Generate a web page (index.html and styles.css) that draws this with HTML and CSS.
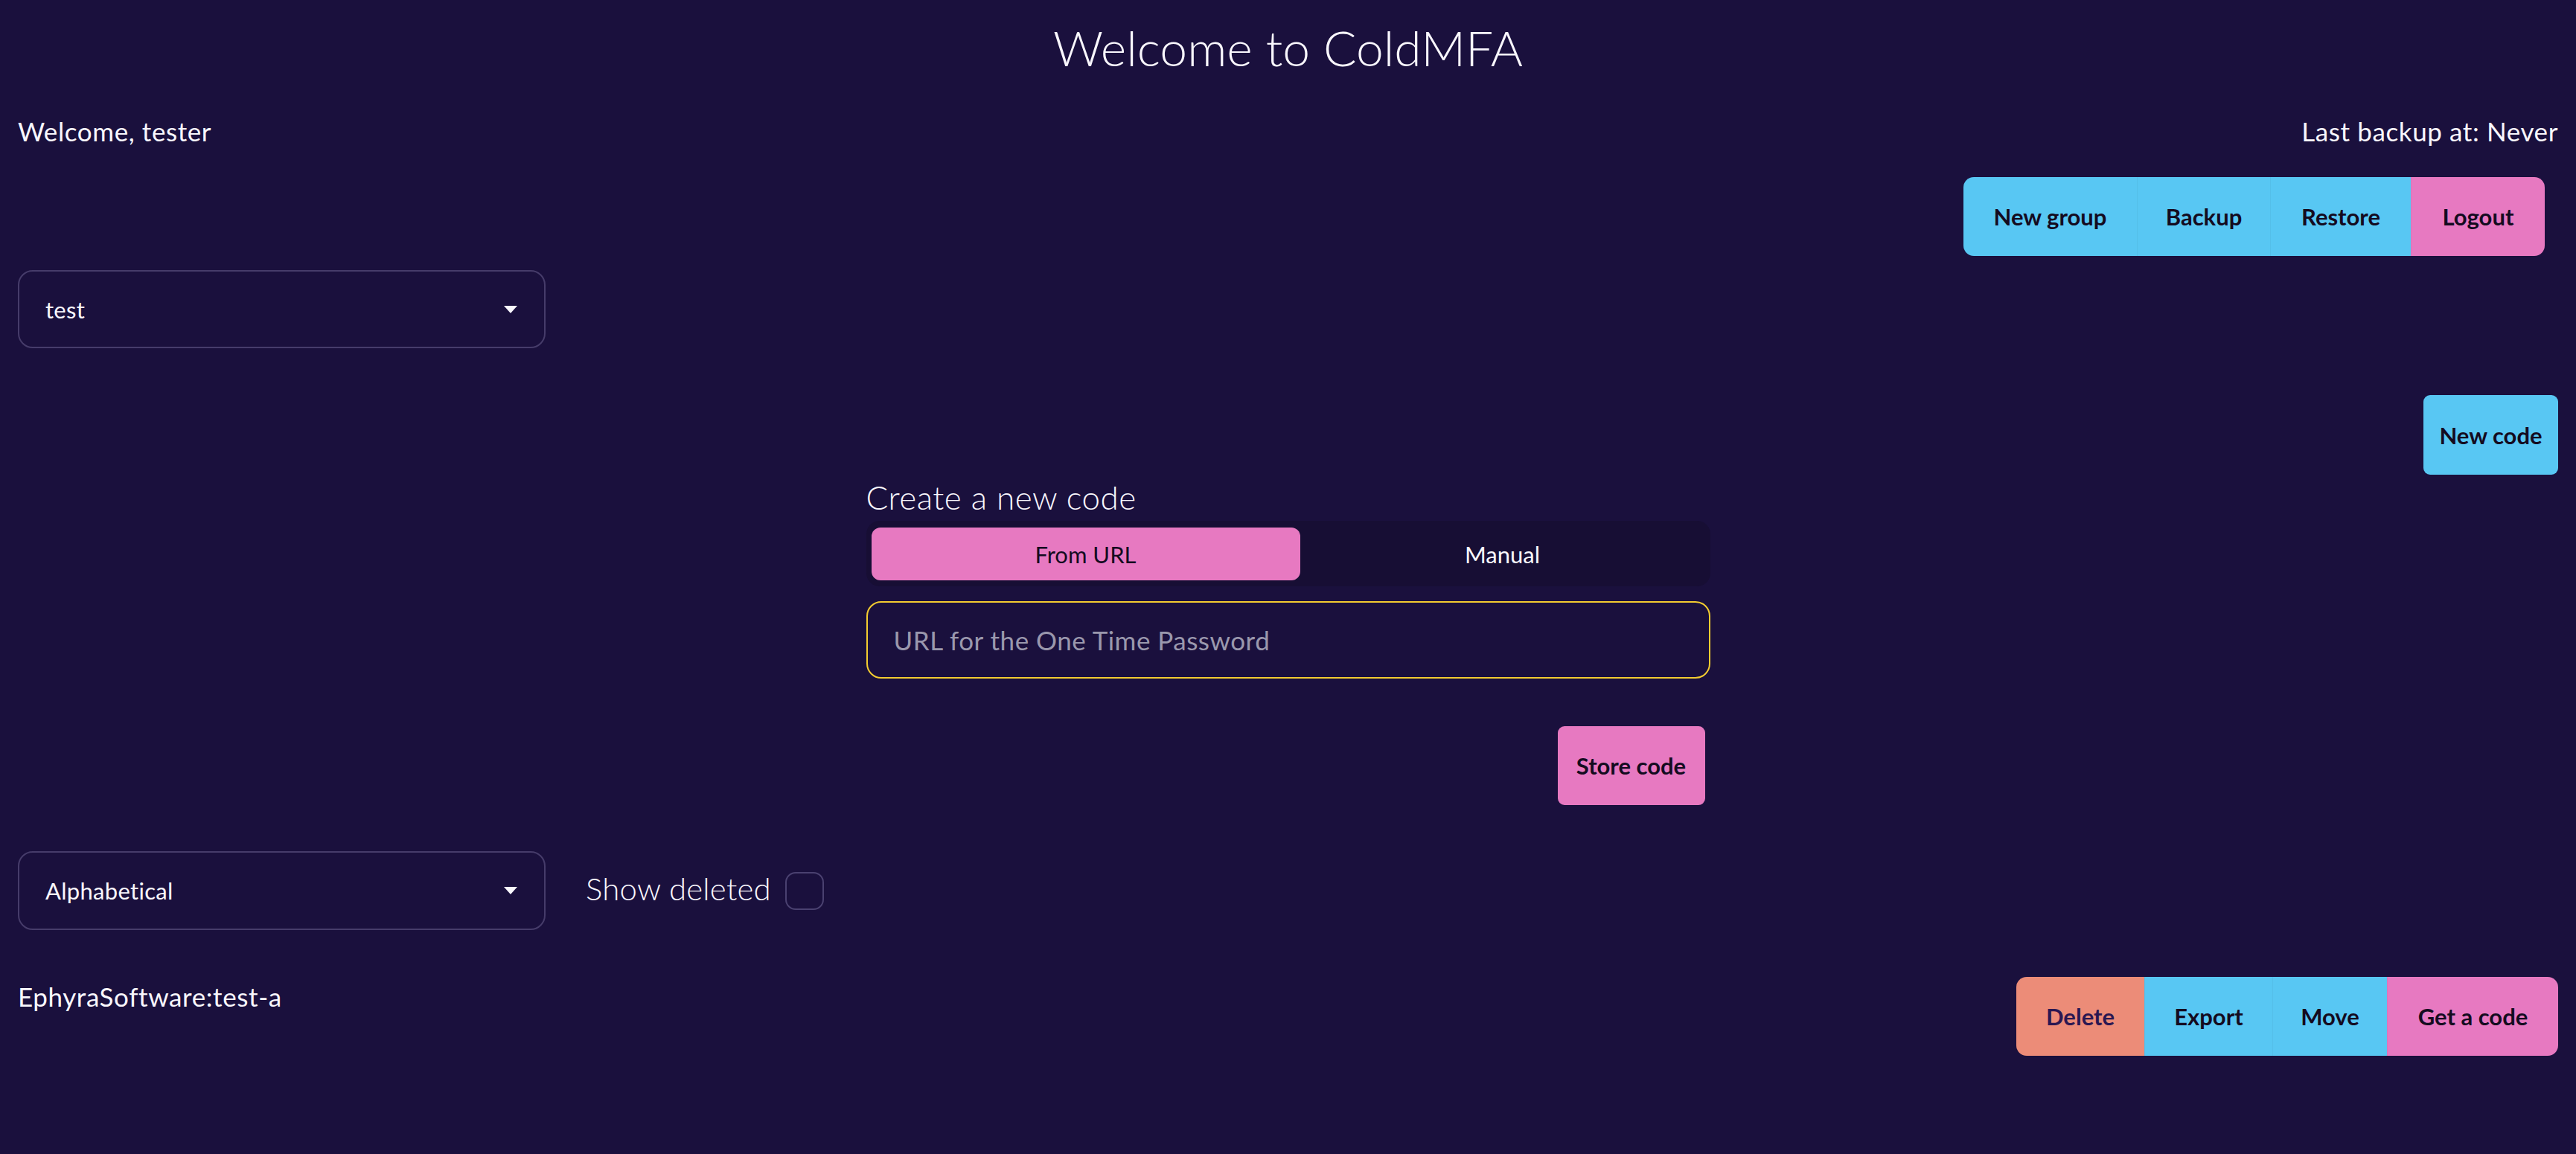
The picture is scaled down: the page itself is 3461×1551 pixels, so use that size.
FILE: index.html
```html
<!DOCTYPE html>
<html lang="en">
<head>
<meta charset="utf-8">
<title>ColdMFA</title>
<link rel="stylesheet" href="styles.css">
</head>
<body>
<div class="page">
  <h1 class="title">Welcome to ColdMFA</h1>

  <div class="topbar">
    <span>Welcome, tester</span>
    <span>Last backup at: Never</span>
  </div>

  <div class="toolbar">
    <div class="join join-top">
      <button class="btn btn-secondary w-newgroup">New group</button>
      <button class="btn btn-secondary w-backup">Backup</button>
      <button class="btn btn-secondary w-restore">Restore</button>
      <button class="btn btn-primary w-logout">Logout</button>
    </div>
  </div>

  <div class="select select-group">
    <span>test</span>
    <svg class="caret" viewBox="0 0 18 10" width="18" height="10"><path d="M0 0 H18 L9 10 Z" fill="#f9f7fd"/></svg>
  </div>

  <div class="newcode-row">
    <button class="btn btn-secondary btn-single w-newcode">New code</button>
  </div>

  <section class="create">
    <h2 class="create-title">Create a new code</h2>
    <div class="tabs">
      <div class="tab tab-active">From URL</div>
      <div class="tab">Manual</div>
    </div>
    <div class="input">URL for the One Time Password</div>
    <div class="create-actions">
      <button class="btn btn-primary btn-single w-store">Store code</button>
    </div>
  </section>

  <div class="sort-row">
    <div class="select select-sort">
      <span>Alphabetical</span>
      <svg class="caret" viewBox="0 0 18 10" width="18" height="10"><path d="M0 0 H18 L9 10 Z" fill="#f9f7fd"/></svg>
    </div>
    <span class="show-label">Show deleted</span>
    <span class="checkbox"></span>
  </div>

  <div class="code-row">
    <span class="code-name">EphyraSoftware:test-a</span>
    <div class="join">
      <button class="btn btn-error w-delete">Delete</button>
      <button class="btn btn-secondary w-export">Export</button>
      <button class="btn btn-secondary w-move">Move</button>
      <button class="btn btn-primary w-getcode">Get a code</button>
    </div>
  </div>
</div>
</body>
</html>
```

FILE: styles.css
```css
* { box-sizing: border-box; }

html, body {
  margin: 0;
  padding: 0;
  background: #1a103d;
}

body {
  color: #f9f7fd;
  font-family: Lato, "Open Sans", "Liberation Sans", sans-serif;
  font-weight: 400;
  font-size: 35px;
}

.page {
  padding: 0 24px;
  min-height: 1551px;
}

.title {
  margin: 0;
  font-size: 66px;
  font-weight: 300;
  line-height: 128px;
  text-align: center;
}

.topbar {
  display: flex;
  justify-content: space-between;
  align-items: center;
  height: 96px;
  font-size: 35px;
  letter-spacing: 0.6px;
}

.toolbar {
  display: flex;
  justify-content: flex-end;
  margin-top: 14px;
  padding-right: 18px;
}

.join {
  display: flex;
  border-radius: 14px;
  overflow: hidden;
  height: 106px;
}

.btn {
  border: none;
  margin: 0;
  padding: 0;
  height: 106px;
  font-family: Lato, "Open Sans", "Liberation Sans", sans-serif;
  font-weight: 700;
  font-size: 31px;
  color: #140b1f;
  cursor: pointer;
  display: flex;
  align-items: center;
  justify-content: center;
}

.btn-secondary { background: #58c7f3; }
.btn-primary { background: #e779c1; }
.btn-error { background: #ec8c78; color: #2a1752; }

.join .btn + .btn { border-left: 1px solid rgba(0, 0, 0, 0.04); }

.btn-single { border-radius: 9px; }

.w-newgroup { width: 233px; }
.w-backup { width: 179px; }
.w-restore { width: 189px; }
.w-logout { width: 180px; }
.w-newcode { width: 181px; height: 107px; }
.w-store { width: 198px; }
.w-delete { width: 172px; }
.w-export { width: 172px; }
.w-move { width: 154px; }
.w-getcode { width: 230px; }

.select {
  display: flex;
  align-items: center;
  justify-content: space-between;
  width: 709px;
  height: 105px;
  border: 2px solid #463c6a;
  border-radius: 20px;
  padding: 0 36px 0 35px;
  font-size: 31px;
  font-weight: 400;
  letter-spacing: 0.3px;
}

.select-group { margin-top: 19px; }
.select-sort { height: 106px; }

.caret { display: block; width: 18px; height: 10px; }

.newcode-row {
  display: flex;
  justify-content: flex-end;
  margin-top: 63px;
}

.create {
  width: 1134px;
  margin: 0 auto;
}

.create-title {
  margin: 0;
  font-size: 44px;
  font-weight: 300;
  line-height: 60px;
  letter-spacing: 0.5px;
}

.tabs {
  display: flex;
  margin-top: 2px;
  height: 88px;
  padding: 9px 7px 8px 7px;
  background: #170e34;
  border-radius: 18px;
}

.tab {
  flex: 1 1 auto;
  display: flex;
  align-items: center;
  justify-content: center;
  font-size: 31px;
  font-weight: 400;
  border-radius: 12px;
  color: #f9f7fd;
}

.tab-active {
  flex-basis: 576px;
  flex-grow: 0;
  background: #e779c1;
  color: #140b1f;
}

.input {
  margin-top: 20px;
  height: 104px;
  border: 2px solid #f3cc30;
  border-radius: 20px;
  padding: 0 35px;
  display: flex;
  align-items: center;
  font-size: 35px;
  font-weight: 400;
  letter-spacing: 0.5px;
  color: #9a98ad;
}

.create-actions {
  display: flex;
  justify-content: flex-end;
  margin-top: 64px;
  padding-right: 7px;
}

.sort-row {
  display: flex;
  align-items: center;
  margin-top: 62px;
}

.show-label {
  margin-left: 54px;
  margin-bottom: 6px;
  font-size: 42px;
  font-weight: 300;
  letter-spacing: 0.2px;
}

.checkbox {
  display: block;
  width: 52px;
  height: 51px;
  margin-left: 19px;
  border: 2px solid #4a4170;
  border-radius: 14px;
}

.code-row {
  display: flex;
  justify-content: space-between;
  align-items: flex-start;
  margin-top: 63px;
}

.code-name {
  font-size: 35px;
  line-height: 52px;
  font-weight: 400;
  letter-spacing: 0.6px;
}
```
